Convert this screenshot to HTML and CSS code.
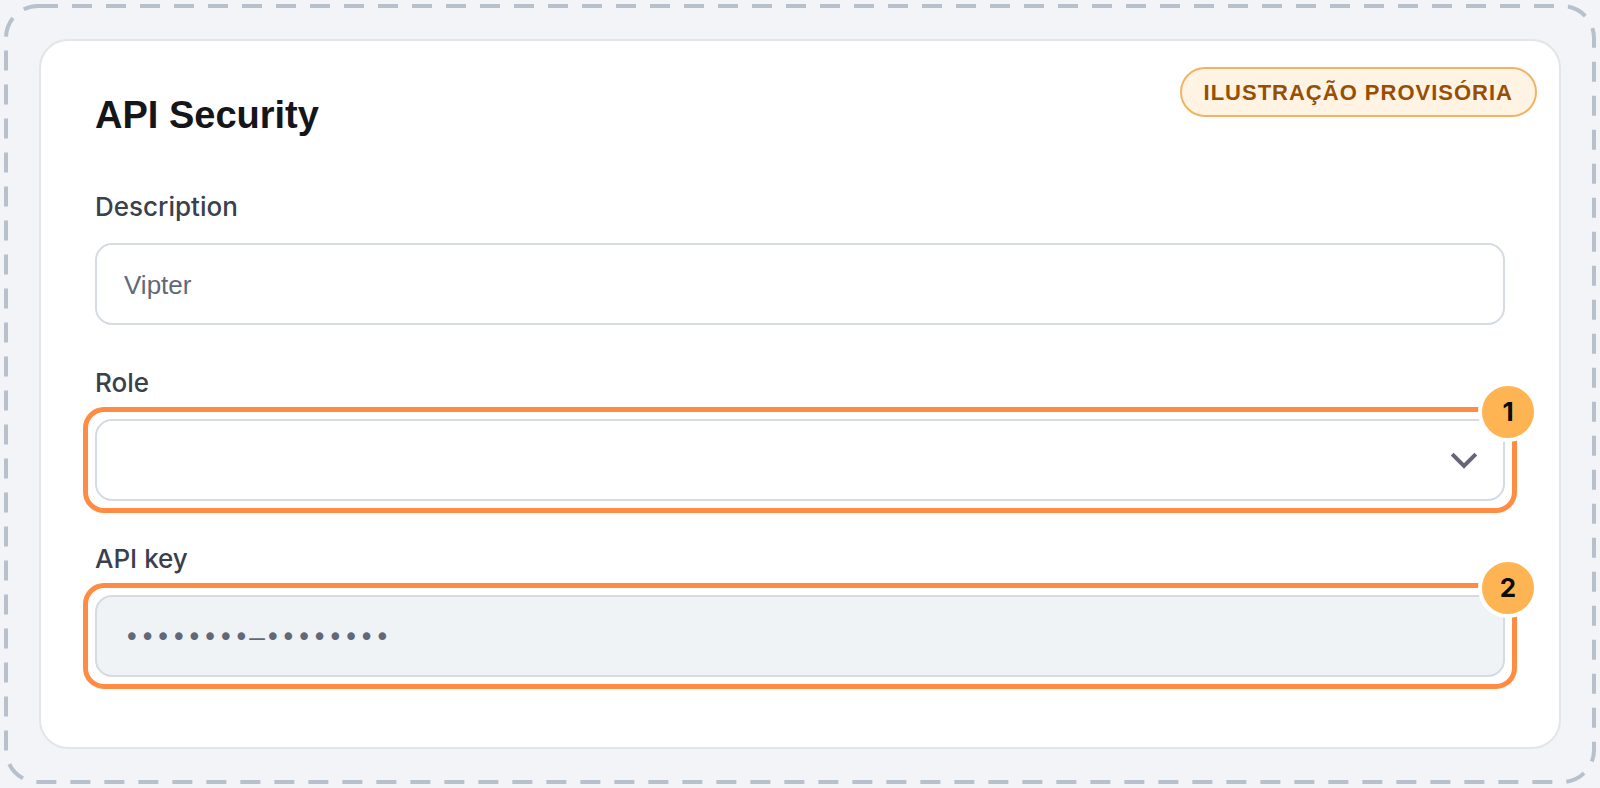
FILE: index.html
```html
<!DOCTYPE html>
<html lang="pt">
<head>
  <meta charset="UTF-8" />
  <title>API Security</title>
  <link rel="stylesheet" href="styles.css">
</head>
<body>
  <main class="frame">
    <svg class="frame-outline" aria-hidden="true">
      <rect class="frame-dash" x="6" y="6" rx="32" />
    </svg>

    <section class="card">
      <header class="card-header">
        <h1>API Security</h1>
        <span class="draft-badge">ILUSTRAÇÃO PROVISÓRIA</span>
      </header>

      <form class="form">
        <div class="field">
          <label for="description">Description</label>
          <div class="control">
            <input type="text" id="description" value="Vipter">
          </div>
        </div>

        <div class="field">
          <label for="role">Role</label>
          <div class="control highlight">
            <select id="role">
              <option value=""></option>
            </select>
            <svg class="chevron" viewBox="0 0 26 16" aria-hidden="true">
              <path d="M1.2 1.2 L13 13 L24.8 1.2" />
            </svg>
            <span class="step">1</span>
          </div>
        </div>

        <div class="field">
          <label for="api-key">API key</label>
          <div class="control highlight">
            <input type="text" id="api-key" class="secret" value="••••••••–••••••••" readonly>
            <span class="step">2</span>
          </div>
        </div>
      </form>
    </section>
  </main>
</body>
</html>
```

FILE: styles.css
```css
* {
  box-sizing: border-box;
}
body {
  margin: 0;
  font-family: "Liberation Sans", Arial, sans-serif;
  background: #f2f4f8;
  color: #14161a;
}

/* Dashed frame around the card */
.frame {
  position: relative;
  display: flex;
  min-height: 100vh;
  padding: 39px;
}
.frame-outline {
  position: absolute;
  inset: 0;
  width: 100%;
  height: 100%;
}
.frame-dash {
  width: calc(100% - 12px);
  height: calc(100% - 12px);
  fill: none;
  stroke: #b8c0cc;
  stroke-width: 4;
  stroke-dasharray: 20 14;
}

.card {
  position: relative;
  flex: 1;
  padding: 26px 0 54px;
  background: #fff;
  border: 2px solid #e2e5e9;
  border-radius: 29px;
}
.card-header {
  display: flex;
  justify-content: space-between;
  align-items: flex-start;
  padding: 0 22px 0 54px;
}
h1 {
  margin: 26px 0 0;
  font-size: 38px;
  line-height: 44px;
  font-weight: bold;
}
.draft-badge {
  padding: 2px 22px 0;
  border: 2px solid #f3b364;
  border-radius: 25px;
  background: #fff3e4;
  color: #974f04;
  font-size: 22px;
  line-height: 44px;
  font-weight: bold;
  letter-spacing: 1px;
}

.form {
  display: flex;
  flex-direction: column;
  gap: 42px;
  padding: 54px 54px 0;
}
.field {
  display: flex;
  flex-direction: column;
  gap: 20px;
}
label {
  font-family: Inter, sans-serif;
  font-size: 26px;
  line-height: 32px;
  font-weight: 500;
  color: #3a404c;
}
.control {
  position: relative;
}
input,
select {
  display: block;
  width: 100%;
  height: 82px;
  padding: 2px 27px 0;
  border: 2px solid #d5dbe0;
  border-radius: 17px;
  background: #fff;
  color: #626877;
  font-family: inherit;
  font-size: 26px;
  appearance: none;
  outline: none;
}
.secret {
  background: #eff3f6;
  font-family: "DejaVu Sans Mono", monospace;
}
.chevron {
  position: absolute;
  top: 34px;
  right: 28px;
  width: 26px;
  height: 16px;
  overflow: visible;
  fill: none;
  stroke: #666575;
  stroke-width: 4;
  pointer-events: none;
}

/* Numbered callouts */
.highlight::after {
  content: "";
  position: absolute;
  inset: -12px;
  border: 5px solid #ff8c42;
  border-radius: 21px;
  pointer-events: none;
}
.step {
  position: absolute;
  z-index: 1;
  top: -37px;
  right: -33px;
  width: 60px;
  height: 60px;
  border: 4px solid #fff;
  border-radius: 50%;
  background: #ffb454;
  color: #0b0b0b;
  font-family: Inter, sans-serif;
  font-size: 26px;
  line-height: 52px;
  font-weight: 700;
  text-align: center;
}
```
